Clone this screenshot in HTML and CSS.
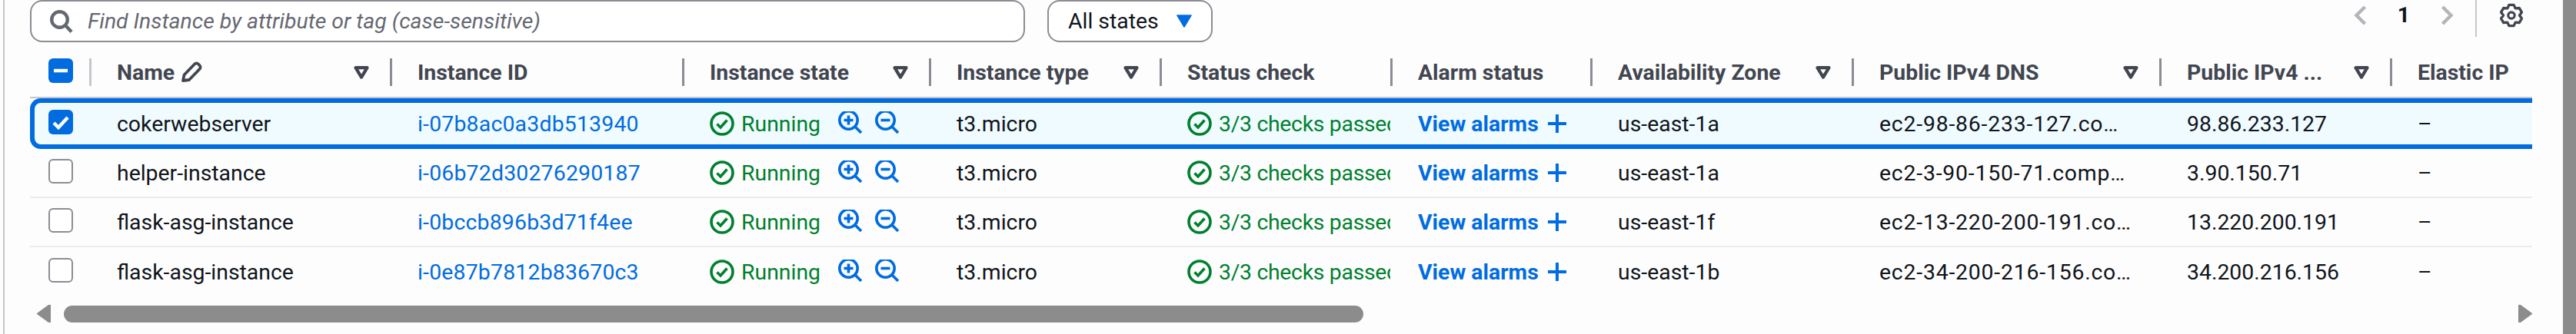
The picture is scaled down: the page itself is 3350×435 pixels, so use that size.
FILE: index.html
```html
<!DOCTYPE html>
<html lang="en">
<head>
  <meta charset="UTF-8" />
  <title>Instances</title>
  <link rel="stylesheet" href="styles.css">
</head>
<body>

  <svg class="sprites" width="0" height="0">
    <symbol id="i-filter" viewBox="0 0 20 17">
      <path d="M2.5 2.2h15L10 14.6z" fill="none" stroke="currentColor" stroke-width="4.2" stroke-linejoin="round"/>
    </symbol>
    <symbol id="i-ok" viewBox="0 0 32 32">
      <circle cx="16" cy="16" r="14" fill="none" stroke="currentColor" stroke-width="3.6"/>
      <path d="M9.5 16.5l4.5 4.5 8.5-9.5" fill="none" stroke="currentColor" stroke-width="3.6"/>
    </symbol>
    <symbol id="i-zoom-in" viewBox="0 0 32 32">
      <circle cx="13.5" cy="13.5" r="11.7" fill="none" stroke="currentColor" stroke-width="3.6"/>
      <path d="M22 22l8 8M7.5 13.5h12M13.5 7.5v12" fill="none" stroke="currentColor" stroke-width="3.6"/>
    </symbol>
    <symbol id="i-zoom-out" viewBox="0 0 32 32">
      <circle cx="13.5" cy="13.5" r="11.7" fill="none" stroke="currentColor" stroke-width="3.6"/>
      <path d="M22 22l8 8M7.5 13.5h12" fill="none" stroke="currentColor" stroke-width="3.6"/>
    </symbol>
    <symbol id="i-plus" viewBox="0 0 24 24">
      <path d="M0 12h24M12 0v24" fill="none" stroke="currentColor" stroke-width="4"/>
    </symbol>
  </svg>

  <div class="shell">
    <main class="page">

      <div class="toolbar">
        <div class="search">
          <svg class="search-icon" viewBox="0 0 30 30">
            <circle cx="12.5" cy="12.5" r="10.3" fill="none" stroke="currentColor" stroke-width="4.4"/>
            <path d="M20 20l8 8.5" fill="none" stroke="currentColor" stroke-width="4.4"/>
          </svg>
          <span class="search-text">Find Instance by attribute or tag (case-sensitive)</span>
        </div>
        <div class="states">
          <span>All states</span>
          <svg class="states-caret" viewBox="0 0 20 17"><path d="M1 1h18l-9 15z" fill="currentColor" stroke="currentColor" stroke-width="1.5" stroke-linejoin="round"/></svg>
        </div>
        <div class="pager">
          <svg class="chevron" viewBox="0 0 17 26"><path d="M14.5 2L3.5 13l11 11" fill="none" stroke="currentColor" stroke-width="4.4"/></svg>
          <span class="pager-num">1</span>
          <svg class="chevron" viewBox="0 0 17 26"><path d="M2.5 2l11 11-11 11" fill="none" stroke="currentColor" stroke-width="4.4"/></svg>
          <span class="pager-sep"></span>
          <svg class="gear" viewBox="0 0 32 32">
            <circle cx="16" cy="16" r="4.2" fill="none" stroke="currentColor" stroke-width="3.2"/>
            <path d="M12.9 2.4h6.2l2.1 4.5 5-.45 3.2 5.45-2.9 4.1 2.9 4.1-3.2 5.45-5-.45-2.1 4.5h-6.2l-2.1-4.5-5 .45-3.2-5.45 2.9-4.1-2.9-4.1 3.2-5.45 5 .45z" fill="none" stroke="currentColor" stroke-width="3.4" stroke-linejoin="round"/>
          </svg>
        </div>
      </div>

      <div class="table">
        <div class="row head">
          <div class="th-check"><span class="check on"><svg viewBox="0 0 32 32"><path d="M7 16h18" stroke="#fff" stroke-width="4.5"/></svg></span></div>
          <div class="th first"><span class="th-label">Name <svg class="pencil" viewBox="0 0 28 28"><path d="M3 25l1.5-7.5L18 3.5a3.5 3.5 0 0 1 5 0l1.5 1.5a3.5 3.5 0 0 1 0 5L11 24z" fill="none" stroke="currentColor" stroke-width="3.8" stroke-linejoin="round"/></svg></span><svg class="filter"><use href="#i-filter"/></svg></div>
          <div class="th"><span class="th-label">Instance ID</span></div>
          <div class="th"><span class="th-label">Instance state</span><svg class="filter"><use href="#i-filter"/></svg></div>
          <div class="th"><span class="th-label">Instance type</span><svg class="filter"><use href="#i-filter"/></svg></div>
          <div class="th"><span class="th-label">Status check</span></div>
          <div class="th"><span class="th-label">Alarm status</span></div>
          <div class="th"><span class="th-label">Availability Zone</span><svg class="filter"><use href="#i-filter"/></svg></div>
          <div class="th"><span class="th-label">Public IPv4 DNS</span><svg class="filter"><use href="#i-filter"/></svg></div>
          <div class="th"><span class="th-label">Public IPv4 ...</span><svg class="filter"><use href="#i-filter"/></svg></div>
          <div class="th"><span class="th-label">Elastic IP</span></div>
        </div>

        <div class="row item selected">
          <div class="td-check"><span class="check on"><svg viewBox="0 0 32 32"><path d="M7 17l6 6 12-13" fill="none" stroke="#fff" stroke-width="4.5"/></svg></span></div>
          <div class="td">cokerwebserver</div>
          <div class="td"><a class="link">i-07b8ac0a3db513940</a></div>
          <div class="td state"><svg class="ok"><use href="#i-ok"/></svg><span class="green">Running</span><svg class="zoom first-zoom"><use href="#i-zoom-in"/></svg><svg class="zoom"><use href="#i-zoom-out"/></svg></div>
          <div class="td">t3.micro</div>
          <div class="td state"><svg class="ok"><use href="#i-ok"/></svg><span class="green checks">3/3 checks passed</span></div>
          <div class="td state"><a class="link strong">View alarms</a><svg class="plus"><use href="#i-plus"/></svg></div>
          <div class="td">us-east-1a</div>
          <div class="td"><span class="clip">ec2-98-86-233-127.compute-1.amazonaws.com</span></div>
          <div class="td">98.86.233.127</div>
          <div class="td">–</div>
        </div>

        <div class="row item">
          <div class="td-check"><span class="check"></span></div>
          <div class="td">helper-instance</div>
          <div class="td"><a class="link">i-06b72d30276290187</a></div>
          <div class="td state"><svg class="ok"><use href="#i-ok"/></svg><span class="green">Running</span><svg class="zoom first-zoom"><use href="#i-zoom-in"/></svg><svg class="zoom"><use href="#i-zoom-out"/></svg></div>
          <div class="td">t3.micro</div>
          <div class="td state"><svg class="ok"><use href="#i-ok"/></svg><span class="green checks">3/3 checks passed</span></div>
          <div class="td state"><a class="link strong">View alarms</a><svg class="plus"><use href="#i-plus"/></svg></div>
          <div class="td">us-east-1a</div>
          <div class="td"><span class="clip">ec2-3-90-150-71.compute-1.amazonaws.com</span></div>
          <div class="td">3.90.150.71</div>
          <div class="td">–</div>
        </div>

        <div class="row item">
          <div class="td-check"><span class="check"></span></div>
          <div class="td">flask-asg-instance</div>
          <div class="td"><a class="link">i-0bccb896b3d71f4ee</a></div>
          <div class="td state"><svg class="ok"><use href="#i-ok"/></svg><span class="green">Running</span><svg class="zoom first-zoom"><use href="#i-zoom-in"/></svg><svg class="zoom"><use href="#i-zoom-out"/></svg></div>
          <div class="td">t3.micro</div>
          <div class="td state"><svg class="ok"><use href="#i-ok"/></svg><span class="green checks">3/3 checks passed</span></div>
          <div class="td state"><a class="link strong">View alarms</a><svg class="plus"><use href="#i-plus"/></svg></div>
          <div class="td">us-east-1f</div>
          <div class="td"><span class="clip">ec2-13-220-200-191.compute-1.amazonaws.com</span></div>
          <div class="td">13.220.200.191</div>
          <div class="td">–</div>
        </div>

        <div class="row item last">
          <div class="td-check"><span class="check"></span></div>
          <div class="td">flask-asg-instance</div>
          <div class="td"><a class="link">i-0e87b7812b83670c3</a></div>
          <div class="td state"><svg class="ok"><use href="#i-ok"/></svg><span class="green">Running</span><svg class="zoom first-zoom"><use href="#i-zoom-in"/></svg><svg class="zoom"><use href="#i-zoom-out"/></svg></div>
          <div class="td">t3.micro</div>
          <div class="td state"><svg class="ok"><use href="#i-ok"/></svg><span class="green checks">3/3 checks passed</span></div>
          <div class="td state"><a class="link strong">View alarms</a><svg class="plus"><use href="#i-plus"/></svg></div>
          <div class="td">us-east-1b</div>
          <div class="td"><span class="clip">ec2-34-200-216-156.compute-1.amazonaws.com</span></div>
          <div class="td">34.200.216.156</div>
          <div class="td">–</div>
        </div>
      </div>

      <div class="hscroll">
        <svg class="arrow" viewBox="0 0 18 23"><path d="M18 0v23h-3L0 12v-1L15 0z" fill="currentColor"/></svg>
        <div class="track"><div class="thumb"></div></div>
        <svg class="arrow" viewBox="0 0 18 23"><path d="M0 0v23h3l15-11v-1L3 0z" fill="currentColor"/></svg>
      </div>

    </main>
    <div class="vscroll"></div>
  </div>

</body>
</html>
```

FILE: styles.css
```css
* {
  margin: 0;
  padding: 0;
  box-sizing: border-box;
}

body {
  font-family: Roboto, "Noto Sans", sans-serif;
  font-size: 28.4px;
  color: #0f141a;
  background: #fdfdfd;
  overflow: hidden;
}

.sprites {
  position: absolute;
}

.shell {
  display: flex;
  height: 435px;
}

.page {
  flex: 1;
  min-width: 0;
  margin-left: 4px;
  border-left: 2px solid #c6c6cd;
  padding-left: 33px;
  padding-right: 40px;
}

.vscroll {
  width: 17px;
  background: #8c8c8c;
}

/* top bar */
.toolbar {
  display: flex;
  height: 55px;
}

.search {
  width: 1294px;
  display: flex;
  align-items: center;
  gap: 19px;
  padding-left: 24px;
  background: #fff;
  border: 2px solid #8c8c94;
  border-radius: 16px;
}

.search-icon {
  width: 30px;
  height: 30px;
  color: #656871;
}

.search-text {
  font-style: italic;
  color: #656871;
}

.states {
  width: 215px;
  margin-left: 29px;
  display: flex;
  align-items: center;
  gap: 23px;
  padding-left: 25px;
  background: #fff;
  border: 2px solid #8c8c94;
  border-radius: 16px;
}

.states-caret {
  width: 20px;
  height: 17px;
  color: #006ce0;
}

.pager {
  margin-left: auto;
  display: flex;
  align-items: flex-start;
  padding-right: 11px;
}

.chevron {
  width: 17px;
  height: 26px;
  margin-top: 7px;
  color: #b4b4bb;
}

.pager-num {
  width: 96px;
  text-align: center;
  font-weight: 700;
  line-height: 36px;
  margin-top: 2px;
}

.pager-sep {
  width: 2px;
  height: 48px;
  margin-left: 28px;
  background: #c6c6cd;
}

.gear {
  width: 32px;
  height: 32px;
  margin: 4px 0 0 29px;
  color: #424650;
}

/* table */
.table {
  margin-top: 15px;
  overflow: hidden;
}

.row {
  display: grid;
  grid-template-columns: 77px 391px 380px 321px 300px 300px 260px 340px 400px 300px 300px;
  width: 3300px;
}

.head {
  height: 58px;
  align-items: center;
  border-bottom: 2px solid #c6c6cd;
}

.th-check,
.td-check {
  padding-left: 24px;
}

.th {
  height: 36px;
  display: flex;
  align-items: center;
  justify-content: space-between;
  padding: 0 27px 0 33px;
  border-left: 3px solid #8c8c94;
  margin-top: -8px;
}

.th-check {
  margin-top: -8px;
}

.th.first {
  border-left-color: #c6c6cd;
}

.th-label {
  display: flex;
  align-items: center;
  gap: 8px;
  font-weight: 700;
  color: #424650;
  white-space: nowrap;
}

.filter {
  width: 20px;
  height: 17px;
  color: #424650;
}

.pencil {
  width: 28px;
  height: 28px;
}

.item {
  height: 64px;
  align-items: center;
  border-bottom: 2px solid #ebebf0;
}

.item.last {
  border-bottom: none;
}

.item.selected {
  height: 66px;
  background: #f0fbff;
  border-bottom: none;
  box-shadow: inset 0 0 0 6px #006ce0;
  border-radius: 14px;
}

.td {
  padding-left: 36px;
  white-space: nowrap;
  overflow: hidden;
  min-width: 0;
}

.clip {
  display: block;
  overflow: hidden;
  text-overflow: ellipsis;
  padding-right: 35px;
  letter-spacing: 0.8px;
}

.state {
  display: flex;
  align-items: center;
}

.check {
  display: block;
  width: 32px;
  height: 32px;
  margin-top: -4px;
  background: #fff;
  border: 2px solid #8c8c94;
  border-radius: 6px;
}

.check.on {
  background: #006ce0;
  border: none;
}

.check svg {
  display: block;
  width: 32px;
  height: 32px;
}

.link {
  color: #006ce0;
  letter-spacing: 0.2px;
}

.strong {
  font-weight: 700;
  letter-spacing: 0;
}

.green {
  color: #00802f;
}

.checks {
  letter-spacing: -0.3px;
}

.ok {
  width: 32px;
  height: 32px;
  margin-right: 9px;
  color: #00802f;
  flex: none;
}

.zoom {
  width: 32px;
  height: 32px;
  margin-left: 16px;
  margin-top: -4px;
  color: #006ce0;
  flex: none;
}

.first-zoom {
  margin-left: 23px;
}

.plus {
  width: 24px;
  height: 24px;
  margin-left: 12px;
  color: #006ce0;
  flex: none;
}

/* horizontal scrollbar */
.hscroll {
  display: flex;
  align-items: center;
  gap: 17px;
  margin-top: 11px;
  padding-left: 9px;
  height: 23px;
  color: #8c8c8c;
}

.arrow {
  width: 18px;
  height: 23px;
  flex: none;
}

.track {
  flex: 1;
}

.thumb {
  width: 1690px;
  height: 22px;
  border-radius: 11px;
  background: #8c8c8c;
}
```
